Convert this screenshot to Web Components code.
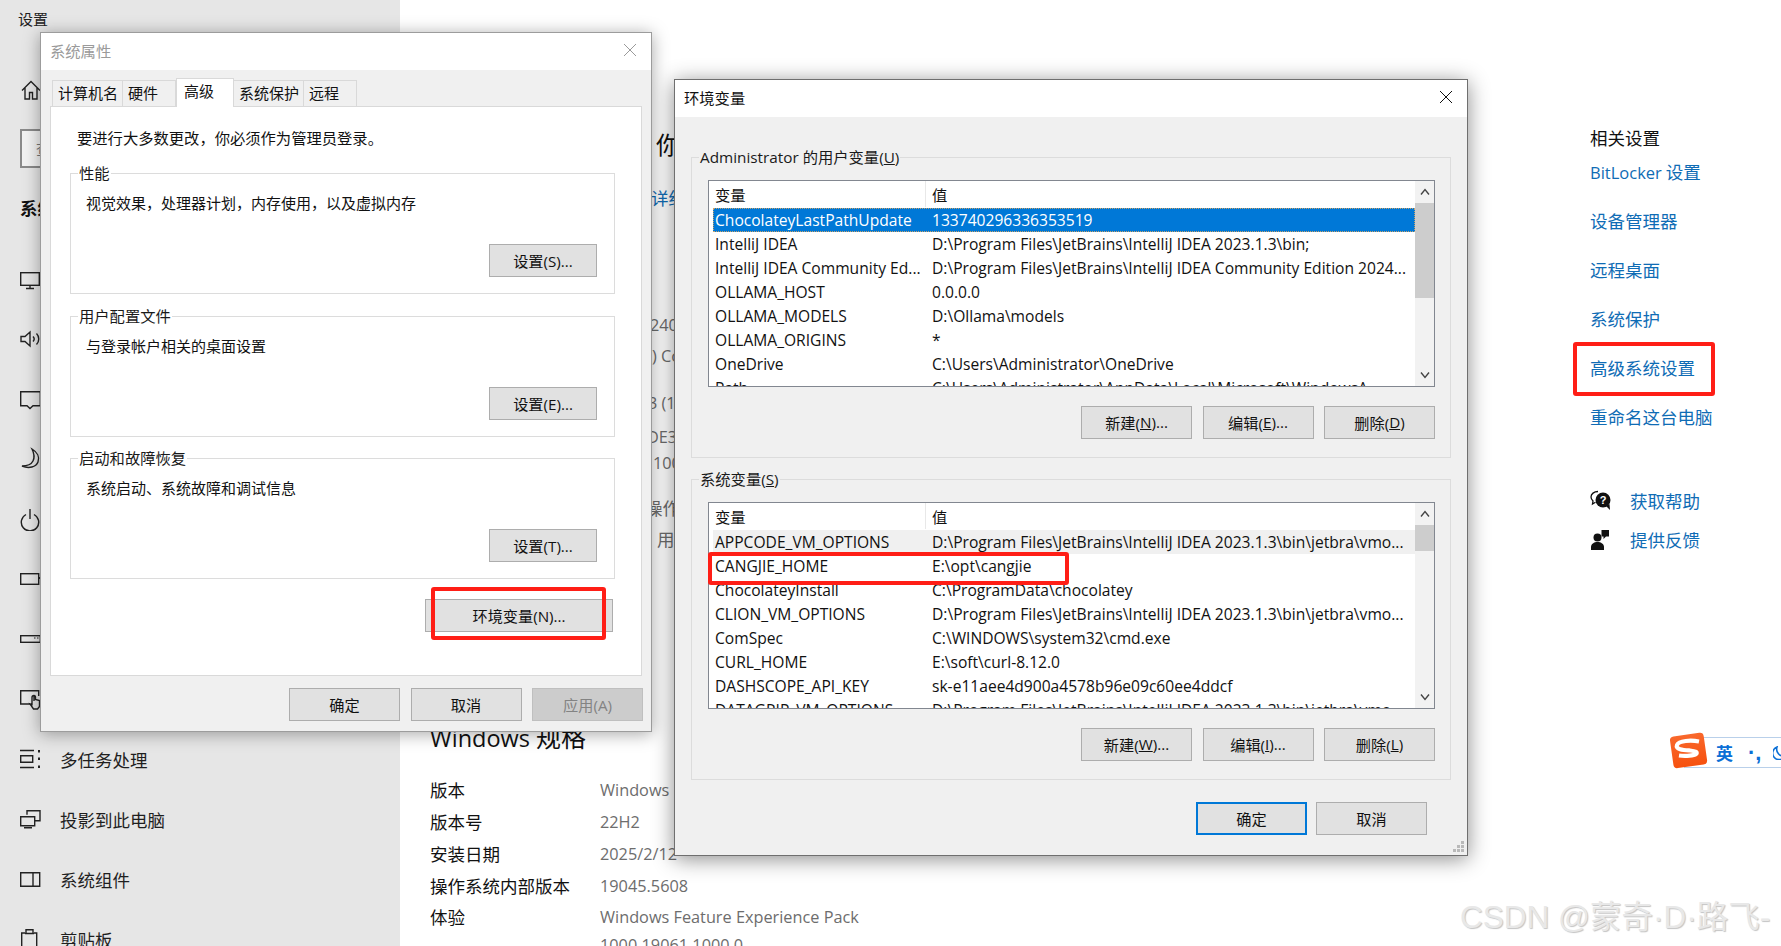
<!DOCTYPE html>
<html lang="zh-CN"><head><meta charset="utf-8"><title>设置</title>
<style>
html,body{margin:0;padding:0;width:1781px;height:946px;overflow:hidden;background:#fff}
body{font-family:"Open Sans","Noto Sans CJK SC",sans-serif;color:#1a1a1a}
</style></head><body>
<settings-desktop>
  <settings-sidebar slot="side"></settings-sidebar>
  <settings-main slot="main"></settings-main>
  <related-panel slot="rel"></related-panel>
  <sys-dialog slot="win"></sys-dialog>
  <env-dialog slot="win"></env-dialog>
  <red-box slot="win" x="431" y="587" w="175" h="53"></red-box>
  <red-box slot="win" x="708" y="552" w="361" h="33"></red-box>
  <red-box slot="win" x="1573" y="342" w="142" h="54"></red-box>
  <ime-bar slot="win"></ime-bar>
  <water-mark slot="win">CSDN @蒙奇·D·路飞-</water-mark>
</settings-desktop>
<script>
const def=(name,html,init)=>{customElements.define(name,class extends HTMLElement{
  connectedCallback(){ if(this.shadowRoot) return; const r=this.attachShadow({mode:'open'}); r.innerHTML=typeof html==='function'?html(this):html; if(init)init(this,r);}
});};
const CJK='"Noto Sans CJK SC",sans-serif';
const UI='"Open Sans","Noto Sans CJK SC",sans-serif';

def('settings-desktop',`<style>:host{display:block;position:relative;width:1781px;height:946px;overflow:hidden}
.row{display:flex;height:946px}</style>
<div class="row"><slot name="side"></slot><slot name="main"></slot><slot name="rel"></slot></div><slot name="win"></slot>`);

/* ---------- sidebar ---------- */
const s='fill="none" stroke="#222" stroke-width="1.4"';
const icons={
 home:`<path ${s} d="M2 12.5 11 3.5l9 9M5 10v11h4.5v-6.5h3V21H17V10"/>`,
 display:`<rect ${s} x=".7" y="5.7" width="18.6" height="12.6"/><path ${s} d="M10 18.5v3M6 21.5h8"/>`,
 sound:`<path ${s} d="M1 9.5h4L10 5v14l-5-4.500H1zM13 9.500c1.500 1.600 1.500 3.500 0 5M16.500 6.500c3 3 3 8 0 11"/>`,
 note:`<path ${s} d="M.7 4.700h19.600v14H13l-3 2.800-3-2.800H.7z"/>`,
 moon:`<path ${s} d="M12 2c5 3 8 8 6 13s-9 7-16 4c5 0 9-1 11-5s1-8-1-12z"/>`,
 power:`<path ${s} d="M6 7.500a8.700 8.700 0 1 0 8 0M10 2v10"/>`,
 battery:`<rect ${s} x=".7" y="6.700" width="18" height="10.600"/><path stroke="#222" stroke-width="2" d="M19 11h2v2"/>`,
 storage:`<rect ${s} x=".7" y="8.700" width="19.600" height="6.600"/><path stroke="#222" stroke-width="1.200" d="M14 11h1.500M17 11h1.500"/>`,
 tablet:`<path ${s} d="M10 17H.7V3.700h18V9"/><path ${s} d="M14 8.500v5.500M14 8.500c1.500 0 1.500 1 1.500 2v2l4 1v6l-2 2.500h-4l-3.500-5 2 .5v-7c0-1 .5-2 2-2z"/>`,
 multi:`<path ${s} d="M0 3.500h14M0 20.500h14M.7 8.700h12v6.600H.7z"/><path stroke="#222" stroke-width="2" d="M19 3v2.500M19 10.500v2.500M19 18.500V21"/>`,
 project:`<path ${s} d="M7 7.700V3.700h13v10h-5"/><path ${s} d="M.7 9.700h14v9H.7zM4 20.800h8"/>`,
 comp:`<path ${s} d="M.7 5.700h19v13.600H.7zM13 5.700v13.600"/>`,
 clip:`<path ${s} d="M5 6H1.700v16h15V6H14M6 6V2.700h7V6M5 6.500h9"/>`
};
const ico=n=>`<svg width="24" height="24" viewBox="0 0 24 24" aria-hidden="true">${icons[n]}</svg>`;
def('nav-item',h=>`<style>:host{display:flex;align-items:center;height:60px;gap:16px;font:17.5px ${CJK};color:#1f1f1f;padding-left:20px;box-sizing:border-box}
svg{flex:none}</style>${ico(h.getAttribute('icon'))}<slot></slot>`);
def('settings-sidebar',`<style>:host{display:block;flex:none;width:400px;height:946px;background:#e6e6e6;box-sizing:border-box;overflow:hidden}
.t{height:38px;padding-left:18px;font:15px/38px ${CJK};color:#222}
.s{margin:9px 0 0 20px;width:100px;height:39px;box-sizing:border-box;border:2px solid #8a8a8a;background:#f2f2f2;font:15px/35px ${CJK};color:#777;padding-left:14px}
.h{margin:26px 0 0 20px;height:28px;font:bold 17.5px/28px ${CJK};color:#111}
.n{margin-top:27px}</style>
<div class="t">设置</div>
<nav-item icon="home" style="margin-top:22px"></nav-item>
<div class="s">查</div>
<div class="h">系统</div>
<div class="n">
<nav-item icon="display"></nav-item><nav-item icon="sound"></nav-item><nav-item icon="note"></nav-item><nav-item icon="moon"></nav-item><nav-item icon="power"></nav-item><nav-item icon="battery"></nav-item><nav-item icon="storage"></nav-item><nav-item icon="tablet"></nav-item>
<nav-item icon="multi">多任务处理</nav-item><nav-item icon="project">投影到此电脑</nav-item><nav-item icon="comp">系统组件</nav-item><nav-item icon="clip">剪贴板</nav-item>
</div>`);

/* ---------- main ---------- */
def('spec-row',`<style>:host{display:grid;grid-template-columns:170px auto;height:var(--h,32px);align-items:center;font:17.5px/24px ${UI};color:#111;white-space:nowrap}
.v{color:#6d6d6d;font-size:16.3px}</style><span><slot name="k"></slot></span><span class="v"><slot name="v"></slot></span>`);
def('settings-main',`<style>:host{display:block;flex:none;width:1080px;height:946px;box-sizing:border-box;padding-left:30px;overflow:hidden;white-space:nowrap;font:16.3px/24px ${UI}}
.frag{color:#6d6d6d;height:24px;padding-left:220px}
.big{font-size:24px;color:#111;padding-left:226px;height:34px;line-height:34px;margin-top:128px}
.link{color:#0f6cb5;padding-left:221px;margin-top:24px;font-size:17.5px}
.cj{font-size:17.5px}
h2{font:500 23.5px/36px ${UI};margin:0;color:#111;height:36px}h2 span{font-size:25px;font-weight:400}
</style>
<div class="big">你</div>
<div class="link frag">详细</div>
<div class="frag" style="margin-top:103px">240</div>
<div class="frag" style="margin-top:7px;padding-left:222px">) Co</div>
<div class="frag" style="margin-top:23px;padding-left:218px">3 (1</div>
<div class="frag" style="margin-top:10px;padding-left:217px">DE3</div>
<div class="frag" style="margin-top:2px;padding-left:223px">100</div>
<div class="frag cj" style="margin-top:21px;padding-left:215px">操作</div>
<div class="frag cj" style="margin-top:7px;padding-left:227px">用于</div>
<h2 style="margin-top:168px">Windows <span>规格</span></h2>
<div style="margin-top:18.500px">
<spec-row><span slot="k">版本</span><span slot="v">Windows</span></spec-row>
<spec-row><span slot="k">版本号</span><span slot="v">22H2</span></spec-row>
<spec-row><span slot="k">安装日期</span><span slot="v">2025/2/12</span></spec-row>
<spec-row><span slot="k">操作系统内部版本</span><span slot="v">19045.5608</span></spec-row>
<spec-row style="--h:31px"><span slot="k">体验</span><span slot="v">Windows Feature Experience Pack</span></spec-row>
<spec-row style="--h:22px"><span slot="k"></span><span slot="v">1000.19061.1000.0</span></spec-row>
</div>`);

/* ---------- right ---------- */
const helpIcon=`<svg width="22" height="22" viewBox="0 0 22 22"><path fill="none" stroke="#111" stroke-width="1.300" d="M8 1.500C4 1.500 1 4 1 7c0 1.800 1 3 2 4l-.5 3 3-1.800"/><circle cx="13" cy="10" r="7.500" fill="#111"/><path d="M16 16l4 4-.5-6z" fill="#111"/><text x="13" y="14" text-anchor="middle" font-size="11" font-weight="bold" font-family="Liberation Sans" fill="#fff">?</text></svg>`;
const fbIcon=`<svg width="22" height="22" viewBox="0 0 22 22" fill="#111"><circle cx="7.500" cy="8.500" r="4"/><path d="M1 21v-3c0-3 3-5 6.500-5s6.500 2 6.500 5v3z"/><path d="M11.500 1H19v6.500h-3l-2.500 2.500V7.500h-2z"/></svg>`;
def('related-panel',`<style>:host{display:block;flex:1;padding:126px 0 0 110px;box-sizing:border-box;font:17.5px/24px ${CJK};white-space:nowrap}
.t{color:#111;height:24px}
a{display:block;color:#0f6cb5;height:24px;margin-top:25px;text-decoration:none}
a.f{margin-top:9.500px}
a span{font:16.5px/24px "Open Sans",sans-serif}
.h{display:flex;align-items:center;gap:18px;height:24px;color:#0f6cb5}
.h svg{flex:none}</style>
<div class="t">相关设置</div>
<a class="f"><span>BitLocker</span> 设置</a><a>设备管理器</a><a>远程桌面</a><a>系统保护</a><a>高级系统设置</a><a>重命名这台电脑</a>
<div class="h" style="margin-top:60px">${helpIcon}<span>获取帮助</span></div>
<div class="h" style="margin-top:15px">${fbIcon}<span>提供反馈</span></div>`);

/* ---------- widgets ---------- */
def('win-button',`<style>:host{display:inline-flex;align-items:center;justify-content:center;box-sizing:border-box;width:var(--w,111px);height:33px;padding-bottom:2px;background:#e1e1e1;border:1px solid #adadad;font:15.200px ${UI};color:#111;white-space:nowrap}
:host([primary]){border:2px solid #0078d7}
:host([disabled]){background:#ccc;border-color:#bfbfbf;color:#838383}</style><slot></slot>`);
def('group-box',`<style>:host{display:block;position:relative;box-sizing:border-box;border:1px solid #dcdcdc}
.l{position:absolute;left:7px;top:-12px;padding:0 1px;background:var(--bg,#fff);font:15.300px/22px ${UI};color:#1a1a1a;white-space:nowrap}</style>
<div class="l"><slot name="legend"></slot></div><slot></slot>`);
def('title-bar',h=>`<style>:host{display:flex;align-items:center;justify-content:space-between;height:37px;background:#fff;box-sizing:border-box;padding:0 14px 3px var(--pl,9px);font:15.300px ${CJK};color:var(--tc,#111)}
svg{display:block}</style><span><slot></slot></span><svg width="14" height="14" viewBox="0 0 14 14"><path d="M1 1l12 12M13 1L1 13" stroke="var(--tc,#111)" stroke-width="1" fill="none"/></svg>`);
def('tab-item',`<style>:host{display:block;box-sizing:border-box;height:26px;padding:0 0 0 5px;background:#f0f0f0;border:1px solid #d9d9d9;border-bottom:none;border-left-width:0;font:15px/24px ${CJK};color:#111;width:var(--w,70px)}
:host([on]){background:#fff;height:29px;margin-bottom:-1px;padding:0 0 0 7px;border-left-width:1px;position:relative}</style><slot></slot>`);
def('setting-group',h=>`<style>:host{display:block}
group-box{height:var(--gh,121px)}
.in{display:flex;flex-direction:column;height:100%;box-sizing:border-box;padding:17px 17px 16px 15px}
.d{font:15px/24px ${CJK};color:#111}
.b{margin-top:auto;text-align:right}</style>
<group-box><span slot="legend" style="font:15px/22px ${CJK}">${h.getAttribute('legend')}</span>
<div class="in"><div class="d"><slot name="d"></slot></div><div class="b"><win-button style="--w:108px">${h.getAttribute('btn')}</win-button></div></div></group-box>`);

def('sys-dialog',`<style>:host{position:absolute;left:40px;top:32px;width:612px;height:700px;box-sizing:border-box;background:#f0f0f0;border:1px solid #9c9c9c;box-shadow:0 2px 16px rgba(0,0,0,.35);display:flex;flex-direction:column}
.tabs{display:flex;align-items:flex-end;margin:8px 0 0 11px;height:28px;box-sizing:border-box;padding:0}
.wrap{padding:0 9px}
.panel{background:#fff;border:1px solid #d9d9d9;height:570px;box-sizing:border-box;padding:18px 26px 0 19px;display:flex;flex-direction:column}
.i{font:15.300px/24px ${CJK};color:#111;padding-left:7px;margin-bottom:24px}
.env{margin-top:20px;text-align:right;padding-right:2px}
.foot{display:flex;justify-content:flex-end;gap:10.500px;padding:12px 8px 0 0}
</style>
<title-bar style="--tc:#9a9a9a">系统属性</title-bar>
<div class="tabs">
<tab-item style="--w:71px;border-left-width:1px">计算机名</tab-item><tab-item style="--w:53px">硬件</tab-item><tab-item on style="--w:58px">高级</tab-item><tab-item style="--w:70px">系统保护</tab-item><tab-item style="--w:53px">远程</tab-item>
</div>
<div class="wrap"><div class="panel">
<div class="i">要进行大多数更改，你必须作为管理员登录。</div>
<setting-group legend="性能" btn="设置(S)..."><span slot="d">视觉效果，处理器计划，内存使用，以及虚拟内存</span></setting-group>
<setting-group legend="用户配置文件" btn="设置(E)..." style="margin-top:22px"><span slot="d">与登录帐户相关的桌面设置</span></setting-group>
<setting-group legend="启动和故障恢复" btn="设置(T)..." style="margin-top:21px"><span slot="d">系统启动、系统故障和调试信息</span></setting-group>
<div class="env"><win-button style="--w:188px">环境变量(N)...</win-button></div>
</div></div>
<div class="foot"><win-button>确定</win-button><win-button>取消</win-button><win-button disabled>应用(A)</win-button></div>`);

def('var-row',h=>`<style>:host{display:grid;grid-template-columns:213px 1fr;height:24px;font:15.600px/24px ${UI};color:#111;white-space:nowrap}
:host([sel]){background:#0078d7;color:#fff;outline:1px dotted #c9a36a;outline-offset:-1px}
:host([hov]){background:#f0f0f0}
span{overflow:hidden;padding-left:2px}span+span{padding-left:6px;overflow:hidden}</style>
<span>${h.getAttribute('n')}</span><span>${h.getAttribute('v')}</span>`);
def('var-list',h=>`<style>:host{display:flex;box-sizing:border-box;height:207px;border:1px solid #828790;background:#fff;overflow:hidden}
.t{flex:none;width:706px;padding-left:4px;box-sizing:border-box;overflow:hidden}
.hd{display:grid;grid-template-columns:213px 1fr;height:27px;font:15.300px/26px ${CJK};color:#111}
.hd span{padding-left:2px;border-right:1px solid #e8e8e8;margin-bottom:2px}.hd span+span{padding-left:6px;border:none}
.sb{flex:none;width:20px;background:#f2f2f2;display:flex;flex-direction:column;align-items:center;margin-left:0}
.a{height:22px;flex:none;display:flex;align-items:center;justify-content:center;width:100%}
.th{flex:none;width:100%;background:#cdcdcd;height:${h.getAttribute('thumb')}px}
.a.d{margin-top:auto}</style>
<div class="t"><div class="hd"><span>变量</span><span>值</span></div><slot></slot></div>
<div class="sb"><div class="a"><svg width="10" height="8" viewBox="0 0 10 8"><path d="M1 6.500 5 1.500l4 5" fill="none" stroke="#444" stroke-width="1.400"/></svg></div><div class="th"></div>
<div class="a d"><svg width="10" height="8" viewBox="0 0 10 8"><path d="M1 1.500l4 5 4-5" fill="none" stroke="#444" stroke-width="1.400"/></svg></div></div>`);
def('env-section',`<style>:host{display:block;height:301px}
group-box{height:301px;--bg:#f0f0f0}
.in{padding:22px 15px 0 16px}
.b{display:flex;justify-content:flex-end;gap:10.500px;margin-top:19px}</style>
<group-box><slot name="legend" slot="legend"></slot><div class="in"><slot name="list"></slot><div class="b"><slot name="btn"></slot></div></div></group-box>`);

def('env-dialog',`<style>:host{position:absolute;left:674px;top:79px;width:794px;height:777px;box-sizing:border-box;background:#f0f0f0;border:1px solid #6f6f6f;box-shadow:0 3px 20px rgba(0,0,0,.45);display:flex;flex-direction:column}
.body{padding:40px 16px 0 16px}
.foot{display:flex;justify-content:flex-end;gap:9px;padding:22px 40px 0 0}
.grip{position:absolute;right:2px;bottom:2px}
u{text-decoration:underline}</style>
<title-bar>环境变量</title-bar>
<div class="body">
<env-section>
<span slot="legend">Administrator 的用户变量(<u>U</u>)</span>
<var-list slot="list" thumb="95">
<var-row sel n="ChocolateyLastPathUpdate" v="133740296336353519"></var-row>
<var-row n="IntelliJ IDEA" v="D:\\Program Files\\JetBrains\\IntelliJ IDEA 2023.1.3\\bin;"></var-row>
<var-row n="IntelliJ IDEA Community Ed..." v="D:\\Program Files\\JetBrains\\IntelliJ IDEA Community Edition 2024..."></var-row>
<var-row n="OLLAMA_HOST" v="0.0.0.0"></var-row>
<var-row n="OLLAMA_MODELS" v="D:\\Ollama\\models"></var-row>
<var-row n="OLLAMA_ORIGINS" v="*"></var-row>
<var-row n="OneDrive" v="C:\\Users\\Administrator\\OneDrive"></var-row>
<var-row n="Path" v="C:\\Users\\Administrator\\AppData\\Local\\Microsoft\\WindowsA..."></var-row>
</var-list>
<win-button slot="btn">新建(<u>N</u>)...</win-button><win-button slot="btn">编辑(<u>E</u>)...</win-button><win-button slot="btn">删除(<u>D</u>)</win-button>
</env-section>
<env-section style="margin-top:21px">
<span slot="legend">系统变量(<u>S</u>)</span>
<var-list slot="list" thumb="26">
<var-row hov n="APPCODE_VM_OPTIONS" v="D:\\Program Files\\JetBrains\\IntelliJ IDEA 2023.1.3\\bin\\jetbra\\vmo..."></var-row>
<var-row n="CANGJIE_HOME" v="E:\\opt\\cangjie"></var-row>
<var-row n="ChocolateyInstall" v="C:\\ProgramData\\chocolatey"></var-row>
<var-row n="CLION_VM_OPTIONS" v="D:\\Program Files\\JetBrains\\IntelliJ IDEA 2023.1.3\\bin\\jetbra\\vmo..."></var-row>
<var-row n="ComSpec" v="C:\\WINDOWS\\system32\\cmd.exe"></var-row>
<var-row n="CURL_HOME" v="E:\\soft\\curl-8.12.0"></var-row>
<var-row n="DASHSCOPE_API_KEY" v="sk-e11aee4d900a4578b96e09c60ee4ddcf"></var-row>
<var-row n="DATAGRIP_VM_OPTIONS" v="D:\\Program Files\\JetBrains\\IntelliJ IDEA 2023.1.3\\bin\\jetbra\\vmo..."></var-row>
</var-list>
<win-button slot="btn">新建(<u>W</u>)...</win-button><win-button slot="btn">编辑(<u>I</u>)...</win-button><win-button slot="btn">删除(<u>L</u>)</win-button>
</env-section>
</div>
<div class="foot"><win-button primary>确定</win-button><win-button>取消</win-button></div>
<svg class="grip" width="12" height="12" viewBox="0 0 12 12" fill="#b9b9b9"><rect x="8" y="0" width="3" height="3"/><rect x="4" y="4" width="3" height="3"/><rect x="8" y="4" width="3" height="3"/><rect x="0" y="8" width="3" height="3"/><rect x="4" y="8" width="3" height="3"/><rect x="8" y="8" width="3" height="3"/></svg>`);

/* ---------- overlays ---------- */
def('red-box',h=>`<style>:host{position:absolute;box-sizing:border-box;border:4px solid #ff1e16;border-radius:3px;left:${h.getAttribute('x')}px;top:${h.getAttribute('y')}px;width:${h.getAttribute('w')}px;height:${h.getAttribute('h')}px}</style>`);
def('ime-bar',`<style>:host{position:absolute;left:1668px;top:731px;width:113px;height:39px}
.bar{position:absolute;left:16px;right:0;top:6px;height:31px;box-sizing:border-box;border:1px solid #b9d0ea;border-right:none;background:#fff;display:flex;align-items:center;padding-left:31px;color:#0a6fd6;font:bold 17px ${CJK};white-space:nowrap;overflow:hidden}
.p{margin-left:15px;font:bold 22px/20px "Liberation Sans",sans-serif;letter-spacing:0}
.m{margin-left:12px;flex:none}
.logo{position:absolute;left:0;top:0}</style>
<div class="bar"><span>英</span><span class="p">·,</span><svg class="m" width="14" height="14" viewBox="0 0 14 14"><path d="M4 1a6.500 6.500 0 1 0 8 9A7 7 0 0 1 4 1z" fill="none" stroke="#0a6fd6" stroke-width="1.600"/></svg></div>
<svg class="logo" width="41" height="39" viewBox="0 0 41 39"><defs><linearGradient id="g" x1="0" y1="0" x2="0" y2="1"><stop offset="0" stop-color="#f9682c"/><stop offset="1" stop-color="#f6510f"/></linearGradient></defs>
<rect x="3.500" y="3.500" width="34" height="32" rx="4" transform="rotate(-8 20 19)" fill="url(#g)"/>
<path d="M31 10.500c-8-1.500-20-1-22 3.500s7 5 13 5.500 8 2 6 3.500-10 2.500-17 1.500" fill="none" stroke="#fff" stroke-width="4.200"/></svg>`);
def('water-mark',`<style>:host{position:absolute;left:1460px;top:897px;font:31.500px/40px "Liberation Sans","Noto Sans CJK SC",sans-serif;color:#e8e8e8;text-shadow:1px 1px 1px #c4c4c4;white-space:nowrap}</style><slot></slot>`);
</script>
</body></html>
